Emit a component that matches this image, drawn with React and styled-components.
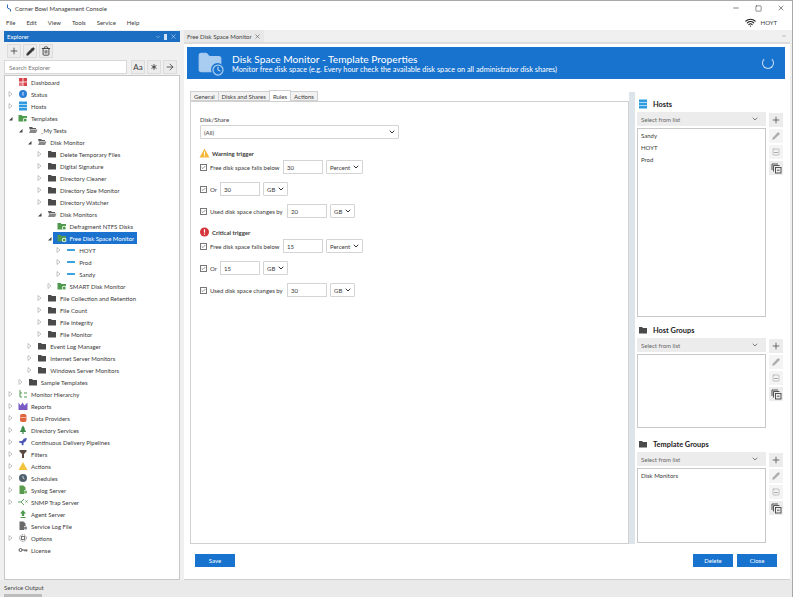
import styled, { createGlobalStyle } from "styled-components";
import { Plus, Pencil, Trash2, Minus, X, ChevronDown, ArrowRight, Asterisk, Wifi, Check, Folder, Clock, Square } from "lucide-react";

const GlobalStyle = createGlobalStyle`
    html, body { margin: 0; padding: 0; background: #f0f0f0; }
    body { font-family: "Lato", "Open Sans", sans-serif; font-size: 6px; color: #3a3a3a; }
    * { box-sizing: border-box; }
`

const treeRows = [
    { level: 0, label: "Dashboard", icon: "dash" },
    { level: 0, label: "Status", icon: "status", arrow: "closed" },
    { level: 0, label: "Hosts", icon: "hosts", arrow: "closed" },
    { level: 0, label: "Templates", icon: "green", arrow: "open" },
    { level: 1, label: "_My Tests", icon: "open", arrow: "open" },
    { level: 2, label: "Disk Monitor", icon: "open", arrow: "open" },
    { level: 3, label: "Delete Temporary Files", icon: "folder", arrow: "closed" },
    { level: 3, label: "Digital Signature", icon: "folder", arrow: "closed" },
    { level: 3, label: "Directory Cleaner", icon: "folder", arrow: "closed" },
    { level: 3, label: "Directory Size Monitor", icon: "folder", arrow: "closed" },
    { level: 3, label: "Directory Watcher", icon: "folder", arrow: "closed" },
    { level: 3, label: "Disk Monitors", icon: "open", arrow: "open" },
    { level: 4, label: "Defragment NTFS Disks", icon: "green" },
    { level: 4, label: "Free Disk Space Monitor", icon: "green", arrow: "open", selected: true },
    { level: 5, label: "HOYT", icon: "dash-host", arrow: "closed" },
    { level: 5, label: "Prod", icon: "dash-host", arrow: "closed" },
    { level: 5, label: "Sandy", icon: "dash-host", arrow: "closed" },
    { level: 4, label: "SMART Disk Monitor", icon: "green", arrow: "closed" },
    { level: 3, label: "File Collection and Retention", icon: "folder", arrow: "closed" },
    { level: 3, label: "File Count", icon: "folder", arrow: "closed" },
    { level: 3, label: "File Integrity", icon: "folder", arrow: "closed" },
    { level: 3, label: "File Monitor", icon: "folder", arrow: "closed" },
    { level: 2, label: "Event Log Manager", icon: "folder", arrow: "closed" },
    { level: 2, label: "Internet Server Monitors", icon: "folder", arrow: "closed" },
    { level: 2, label: "Windows Server Monitors", icon: "folder", arrow: "closed" },
    { level: 1, label: "Sample Templates", icon: "folder", arrow: "closed" },
    { level: 0, label: "Monitor Hierarchy", icon: "hierarchy", arrow: "closed" },
    { level: 0, label: "Reports", icon: "reports", arrow: "closed" },
    { level: 0, label: "Data Providers", icon: "data", arrow: "closed" },
    { level: 0, label: "Directory Services", icon: "tree", arrow: "closed" },
    { level: 0, label: "Continuous Delivery Pipelines", icon: "pipe", arrow: "closed" },
    { level: 0, label: "Filters", icon: "filter", arrow: "closed" },
    { level: 0, label: "Actions", icon: "warn", arrow: "closed" },
    { level: 0, label: "Schedules", icon: "clock", arrow: "closed" },
    { level: 0, label: "Syslog Server", icon: "syslog", arrow: "closed" },
    { level: 0, label: "SNMP Trap Server", icon: "snmp", arrow: "closed" },
    { level: 0, label: "Agent Server", icon: "agent" },
    { level: 0, label: "Service Log File", icon: "log" },
    { level: 0, label: "Options", icon: "options", arrow: "closed" },
    { level: 0, label: "License", icon: "key" },
]

const triggers = [
    { name: "Warning trigger", kind: "warn", below: "30", or: "30", used: "20" },
    { name: "Critical trigger", kind: "crit", below: "15", or: "15", used: "30" },
]

const sections = [
    { title: "Hosts", icon: "hosts", items: ["Sandy", "HOYT", "Prod"], height: 189, gap: 7 },
    { title: "Host Groups", icon: "folder", items: [], height: 74, gap: 10 },
    { title: "Template Groups", icon: "folder", items: ["Disk Monitors"], height: 75, gap: 0 },
]

const TreeIcon = ({ kind }) => {
    switch (kind) {
        case "dash":
            return <svg width="10" height="10" viewBox="0 0 10 10"><rect x="1" y="1" width="3.6" height="3.6" fill="#d8434a" /><rect x="5.4" y="1" width="3.6" height="3.6" fill="#d8434a" /><rect x="1" y="5.4" width="3.6" height="3.6" fill="#e0777a" /><rect x="5.4" y="5.4" width="3.6" height="3.6" fill="#d8434a" /></svg>
        case "status":
            return <svg width="10" height="10" viewBox="0 0 10 10"><circle cx="5" cy="5" r="4" fill="#2b7fd6" /><rect x="4.4" y="3" width="1.2" height="3.6" fill="#bcd9f5" /></svg>
        case "hosts":
            return <svg width="10" height="10" viewBox="0 0 10 10"><rect x="1" y="0.5" width="8" height="2.6" fill="#2f9ae0" /><rect x="1" y="3.7" width="8" height="2.6" fill="#2f9ae0" /><rect x="1" y="6.9" width="8" height="2.6" fill="#2f9ae0" /></svg>
        case "green":
            return <svg width="10" height="10" viewBox="0 0 10 10"><path d="M0.5 2h3l1 1h4.500v5.500h-8.500z" fill="#4f9a4f" /><circle cx="7.200" cy="7" r="2.300" fill="#fff" /><circle cx="7.200" cy="7" r="1.500" fill="#4f9a4f" /></svg>
        case "folder":
            return <svg width="10" height="10" viewBox="0 0 10 10"><path d="M1 2h3l1 1h4v5.500h-8z" fill="#4a4a4a" /></svg>
        case "open":
            return <svg width="10" height="10" viewBox="0 0 10 10"><path d="M1 2h3l1 1h3v1h-5l-1 1z" fill="#5a5a5a" /><path d="M1 8l1.500-3.400h7l-1.500 3.400z" fill="#888" /></svg>
        case "dash-host":
            return <svg width="10" height="10" viewBox="0 0 10 10"><rect x="1" y="4" width="8" height="2" rx="0.600" fill="#36a3e0" /></svg>
        case "hierarchy":
            return <svg width="10" height="10" viewBox="0 0 10 10" fill="none" stroke="#4f9a4f" strokeWidth="1"><path d="M2 1v7h2M2 4h2M6 4h3M6 8h3" /></svg>
        case "reports":
            return <svg width="10" height="10" viewBox="0 0 10 10"><path d="M0.500 9V1.500l2 3 2-3 2 3 3-3V9z" fill="#7a5bc4" /></svg>
        case "data":
            return <svg width="10" height="10" viewBox="0 0 10 10"><rect x="2" y="1" width="6.500" height="8" rx="2" fill="#e0663f" /><rect x="2" y="4" width="6.500" height="0.800" fill="#f6c9b8" /></svg>
        case "tree":
            return <svg width="10" height="10" viewBox="0 0 10 10"><path d="M5 0.500l2 3H6.200l2 3.500H1.800l2-3.500H3z" fill="#3a8a4a" /><rect x="4.400" y="7" width="1.200" height="2" fill="#3a8a4a" /></svg>
        case "pipe":
            return <svg width="10" height="10" viewBox="0 0 10 10"><path d="M9 1L6 1.500 4 4H1.500L1 5.500l2.500.5.500 2.500L5.500 8V6L8 4z" fill="#4a55b8" /></svg>
        case "filter":
            return <svg width="10" height="10" viewBox="0 0 10 10"><path d="M1.500 1h7v1.500L6 5v4H4V5L1.500 2.500z" fill="#5a4a42" /></svg>
        case "warn":
            return <svg width="10" height="10" viewBox="0 0 10 10"><path d="M5 1l4.500 8h-9z" fill="#f4c33d" /></svg>
        case "clock":
            return <svg width="10" height="10" viewBox="0 0 10 10"><circle cx="5" cy="5" r="4" fill="#50606e" /><path d="M5 2.800V5l1.500 1" stroke="#fff" strokeWidth="0.700" fill="none" /></svg>
        case "syslog":
            return <svg width="10" height="10" viewBox="0 0 10 10"><path d="M1.500 0.500h4l2 2v2.500H6v4H1.500z" fill="#5a9a4f" /><circle cx="7.500" cy="7" r="1.700" fill="#7db86f" /></svg>
        case "snmp":
            return <svg width="10" height="10" viewBox="0 0 10 10" fill="none" stroke="#4f9a4f" strokeWidth="0.900"><path d="M0 5h3M3 5l3-3M6 8L3 5M7.500 3.500l2 2M9.500 3.500l-2 2" /></svg>
        case "agent":
            return <svg width="10" height="10" viewBox="0 0 10 10"><path d="M5 1l3 3.500H6.200V7H3.800V4.500H2z" fill="#4f9a4f" /><rect x="2.500" y="8" width="5" height="1" fill="#4f9a4f" /></svg>
        case "log":
            return <svg width="10" height="10" viewBox="0 0 10 10"><path d="M1.500 0.500h4l2 2v2.500H6v4H1.500z" fill="#6a6a6a" /><circle cx="7.500" cy="7" r="1.700" fill="#8a8a8a" /></svg>
        case "options":
            return <svg width="10" height="10" viewBox="0 0 10 10" fill="none" stroke="#777" strokeWidth="1"><circle cx="5" cy="5" r="3.300" strokeDasharray="1.500 0.800" /><rect x="3.500" y="3.500" width="3" height="3" /></svg>
        case "key":
            return <svg width="10" height="10" viewBox="0 0 10 10" fill="none" stroke="#555" strokeWidth="1"><circle cx="2.500" cy="5" r="1.500" /><path d="M4 5h5.500M7 5v1.500M8.700 5v1.500" /></svg>
        default:
            return null
    }
}

const Expander = ({ state }) => {
    if (state === "open") return <svg width="5" height="5" viewBox="0 0 5 5"><path d="M4.500 1v3.500H1z" fill="#444" /></svg>
    if (state === "closed") return <svg width="5" height="6" viewBox="0 0 5 6"><path d="M1 .500l3 2.500-3 2.500z" fill="#fff" stroke="#a0a0a0" strokeWidth=".6" /></svg>
    return null
}

const Combo = ({ value, width }) => (
    <ComboBox $width={width}>
        <span>{value}</span>
        <ChevronDown size={8} strokeWidth={3} color="#333" />
    </ComboBox>
)

const Tick = () => (
    <CheckBox><Check size={7} strokeWidth={2.500} color="#333" /></CheckBox>
)

const Trigger = ({ trigger }) => (
    <TriggerBlock>
        <TriggerTitle>
            {trigger.kind === "warn" ? (
                <svg width="11" height="10" viewBox="0 0 11 10"><path d="M5.500 0.500l5 9h-10z" fill="#f4b93a" /><rect x="5" y="3.500" width="1" height="3.200" fill="#fff" /><rect x="5" y="7.300" width="1" height="1" fill="#fff" /></svg>
            ) : (
                <svg width="11" height="10" viewBox="0 0 11 10"><circle cx="5.500" cy="5" r="4.500" fill="#d4343a" /><rect x="4.900" y="2.300" width="1.200" height="3.400" fill="#fff" /><rect x="4.900" y="6.500" width="1.200" height="1.200" fill="#fff" /></svg>
            )}
            <span>{trigger.name}</span>
        </TriggerTitle>
        <TriggerRow>
            <Tick />
            <RowLabel $width={70}>Free disk space falls below</RowLabel>
            <NumberInput>{trigger.below}</NumberInput>
            <Combo value="Percent" width={37} />
        </TriggerRow>
        <TriggerRow>
            <Tick />
            <RowLabel $width={7}>Or</RowLabel>
            <NumberInput>{trigger.or}</NumberInput>
            <Combo value="GB" width={25} />
        </TriggerRow>
        <TriggerRow>
            <Tick />
            <RowLabel $width={74}>Used disk space changes by</RowLabel>
            <NumberInput>{trigger.used}</NumberInput>
            <Combo value="GB" width={25} />
        </TriggerRow>
    </TriggerBlock>
)

const SideSection = ({ section }) => (
    <Section $gap={section.gap}>
        <SectionTitle>
            <TreeIcon kind={section.icon} />
            <span>{section.title}</span>
        </SectionTitle>
        <SectionBody>
            <div>
                <SideCombo>
                    <span>Select from list</span>
                    <ChevronDown size={8} strokeWidth={2} color="#444" />
                </SideCombo>
                <ListBox $height={section.height}>
                    {section.items.map((item) => <ListItem key={item}>{item}</ListItem>)}
                </ListBox>
            </div>
            <SideButtons>
                <SideButton><Plus size={10} color="#555" /></SideButton>
                <SideButton $faded><Pencil size={8} color="#aaa" fill="#aaa" /></SideButton>
                <SideButton $faded><Square size={8} color="#aaa" /><MinusMark /></SideButton>
                <SideButton>
                    <svg width="11" height="11" viewBox="0 0 11 11" fill="none" stroke="#444" strokeWidth="0.900"><path d="M1 7V1h6M2.500 8.500v-6h6" /><rect x="4.500" y="4.500" width="5.500" height="5.500" /><path d="M6 7.200h2.500" /></svg>
                </SideButton>
            </SideButtons>
        </SectionBody>
    </Section>
)

const App = () => {
    return (
        <>
            <GlobalStyle />
            <Window>
                <TitleBar>
                    <TitleLeft>
                        <svg width="6" height="8" viewBox="0 0 6 8" fill="none" stroke="#2b6fb8" strokeWidth="1"><path d="M1.500 0.500v3.500l3 1.500v2" /></svg>
                        <span>Corner Bowl Management Console</span>
                    </TitleLeft>
                    <WindowButtons>
                        <Minus size={8} color="#444" />
                        <Square size={7} color="#444" strokeWidth={2} />
                        <X size={8} color="#444" />
                    </WindowButtons>
                </TitleBar>
                <MenuBar>
                    <MenuItems>
                        {["File", "Edit", "View", "Tools", "Service", "Help"].map((item) => (
                            <span key={item}>{item}</span>
                        ))}
                    </MenuItems>
                    <HostBadge>
                        <Wifi size={11} color="#222" strokeWidth={2.500} />
                        <span>HOYT</span>
                    </HostBadge>
                </MenuBar>
                <Workspace>
                    <Explorer>
                        <ExplorerHeader>
                            <span>Explorer</span>
                            <HeaderDots />
                            <ChevronDown size={6} color="#cfe2f6" />
                            <HeaderPin />
                            <X size={7} color="#cfe2f6" />
                        </ExplorerHeader>
                        <ToolRow>
                            <ToolButton><Plus size={10} color="#444" /></ToolButton>
                            <ToolButton><Pencil size={9} color="#333" fill="#333" /></ToolButton>
                            <ToolButton><Trash2 size={10} color="#333" /></ToolButton>
                        </ToolRow>
                        <SearchRow>
                            <SearchBox>Search Explorer</SearchBox>
                            <SearchButton $text>Aa</SearchButton>
                            <SearchButton><Asterisk size={10} color="#333" /></SearchButton>
                            <SearchButton><ArrowRight size={10} color="#444" /></SearchButton>
                        </SearchRow>
                        <Tree>
                            {treeRows.map((row) => (
                                <TreeRow key={row.label} $level={row.level}>
                                    <ArrowSlot><Expander state={row.arrow} /></ArrowSlot>
                                    <RowContent $selected={row.selected}>
                                        <TreeIcon kind={row.icon} />
                                        <span>{row.label}</span>
                                    </RowContent>
                                </TreeRow>
                            ))}
                        </Tree>
                    </Explorer>
                    <Main>
                        <TabStrip>
                            <DocTab>
                                <span>Free Disk Space Monitor</span>
                                <X size={7} color="#555" />
                            </DocTab>
                            <ChevronDown size={6} color="#777" />
                        </TabStrip>
                        <Page>
                            <Banner>
                                <BannerIcon>
                                    <Folder size={26} color="#a9cdf0" fill="#a9cdf0" strokeWidth={1} />
                                    <ClockBadge><Clock size={12} color="#a9cdf0" strokeWidth={2.500} /></ClockBadge>
                                </BannerIcon>
                                <BannerText>
                                    <h1>Disk Space Monitor - Template Properties</h1>
                                    <p>Monitor free disk space (e.g. Every hour check the available disk space on all administrator disk shares)</p>
                                </BannerText>
                                <Spinner />
                            </Banner>
                            <Columns>
                                <FormColumn>
                                    <Tabs>
                                        <Tab>General</Tab>
                                        <Tab>Disks and Shares</Tab>
                                        <Tab $active>Rules</Tab>
                                        <Tab>Actions</Tab>
                                    </Tabs>
                                    <TabPanel>
                                        <FieldLabel>Disk/Share</FieldLabel>
                                        <Combo value="(All)" width={199} />
                                        {triggers.map((trigger) => <Trigger key={trigger.name} trigger={trigger} />)}
                                    </TabPanel>
                                </FormColumn>
                                <Splitter />
                                <SideColumn>
                                    {sections.map((section) => <SideSection key={section.title} section={section} />)}
                                </SideColumn>
                            </Columns>
                            <Footer>
                                <BlueButton>Save</BlueButton>
                                <FooterRight>
                                    <BlueButton>Delete</BlueButton>
                                    <BlueButton>Close</BlueButton>
                                </FooterRight>
                            </Footer>
                        </Page>
                    </Main>
                </Workspace>
                <StatusBar>
                    <span>Service Output</span>
                    <StatusTab />
                </StatusBar>
            </Window>
        </>
    )
}

const Window = styled.div`
    width: 793px;
    height: 597px;
    overflow: hidden;
    display: flex;
    flex-direction: column;
    background: #f0f0f0;
    border-top: 1px solid #a8a8a8;
    border-right: 1px solid #a8a8a8;
`
const TitleBar = styled.div`
    height: 14px;
    background: #fff;
    display: flex;
    align-items: center;
    justify-content: space-between;
    padding: 0 7px 0 6px;
`
const TitleLeft = styled.div`
    display: flex;
    align-items: center;
    gap: 3px;
`
const WindowButtons = styled.div`
    display: flex;
    align-items: center;
    gap: 15px;
`
const MenuBar = styled.div`
    height: 15px;
    background: #fff;
    display: flex;
    align-items: center;
    justify-content: space-between;
    padding: 0 15px 0 6px;
`
const MenuItems = styled.div`
    display: flex;
    gap: 11px;
`
const HostBadge = styled.div`
    display: flex;
    align-items: center;
    gap: 5px;
`
const Workspace = styled.div`
    flex: 1;
    min-height: 0;
    display: flex;
    padding-left: 4px;
`
const Explorer = styled.div`
    width: 176px;
    display: flex;
    flex-direction: column;
    margin-top: 1px;
`
const ExplorerHeader = styled.div`
    height: 11px;
    background: #1b6ec2;
    color: #fff;
    display: flex;
    align-items: center;
    gap: 3px;
    padding: 0 3px;
`
const HeaderDots = styled.div`
    flex: 1;
    height: 4px;
    background-image: radial-gradient(#4f93d8 0.6px, transparent 0.7px);
    background-size: 2px 2px;
`
const HeaderPin = styled.div`
    width: 3px;
    height: 6px;
    background: #cfe2f6;
`
const ToolRow = styled.div`
    display: flex;
    gap: 2px;
    padding: 2px 3px;
`
const ToolButton = styled.div`
    width: 14px;
    height: 14px;
    background: #ececec;
    border: 1px solid #dcdcdc;
    display: flex;
    align-items: center;
    justify-content: center;
`
const SearchRow = styled.div`
    display: flex;
    gap: 2px;
    height: 14px;
    margin-bottom: 1px;
`
const SearchBox = styled.div`
    width: 123px;
    margin-right: 2px;
    background: #fff;
    border: 1px solid #d8d8d8;
    color: #777;
    display: flex;
    align-items: center;
    padding-left: 4px;
`
const SearchButton = styled.div`
    width: 14px;
    background: #ececec;
    border: 1px solid #dcdcdc;
    display: flex;
    align-items: center;
    justify-content: center;
    font-size: ${(props) => (props.$text ? "8px" : "6px")};
`
const Tree = styled.div`
    flex: 1;
    min-height: 0;
    background: #fff;
    border: 1px solid #c8c8c8;
`
const TreeRow = styled.div`
    height: 12px;
    display: flex;
    align-items: center;
    padding-left: ${(props) => 2 + props.$level * 9.65}px;
`
const ArrowSlot = styled.div`
    width: 7px;
    display: flex;
    align-items: center;
    justify-content: center;
`
const RowContent = styled.div`
    height: 12px;
    display: flex;
    align-items: center;
    gap: 3px;
    padding: 0 3px 0 4px;
    white-space: nowrap;
    background: ${(props) => (props.$selected ? "#1b72cf" : "transparent")};
    color: ${(props) => (props.$selected ? "#fff" : "#3a3a3a")};
`
const Main = styled.div`
    flex: 1;
    min-width: 0;
    display: flex;
    flex-direction: column;
    margin-left: 4px;
    margin-right: 2px;
`
const TabStrip = styled.div`
    height: 14px;
    display: flex;
    align-items: center;
    justify-content: space-between;
    padding-right: 3px;
    border-bottom: 2px solid #dcdcdc;
`
const DocTab = styled.div`
    width: 80px;
    height: 12px;
    display: flex;
    align-items: center;
    justify-content: space-between;
    padding: 0 3px;
    background: #e8e8e8;
    color: #444;
    white-space: nowrap;
`
const Page = styled.div`
    flex: 1;
    min-height: 0;
    background: #fff;
    display: flex;
    flex-direction: column;
    padding: 3px 5px 0 3px;
    border-bottom: 1px solid #cfcfcf;
`
const Banner = styled.div`
    height: 32px;
    flex-shrink: 0;
    background: #1873cf;
    display: flex;
    align-items: center;
    padding: 0 11px 0 10px;
    color: #fff;
`
const BannerIcon = styled.div`
    position: relative;
    width: 35px;
    height: 26px;
`
const ClockBadge = styled.div`
    position: absolute;
    right: 8px;
    bottom: 0;
    width: 13px;
    height: 13px;
    border-radius: 50%;
    background: #1873cf;
    display: flex;
    align-items: center;
    justify-content: center;
`
const BannerText = styled.div`
    flex: 1;
    h1 {
        margin: 0;
        font-size: 10.2px;
        font-weight: 400;
        line-height: 12px;
    }
    p {
        margin: 0;
        font-size: 7.3px;
        line-height: 9px;
    }
`
const Spinner = styled.div`
    width: 12px;
    height: 12px;
    border-radius: 50%;
    border: 1.5px solid #cfe2f6;
    border-top-color: #1873cf;
`
const Columns = styled.div`
    flex: 1;
    min-height: 0;
    display: flex;
    padding: 12px 0 0 3px;
`
const FormColumn = styled.div`
    width: 439px;
    display: flex;
    flex-direction: column;
`
const Tabs = styled.div`
    display: flex;
    height: 10px;
    align-items: flex-end;
`
const Tab = styled.div`
    height: ${(props) => (props.$active ? "11px" : "10px")};
    padding: 0 3px;
    background: ${(props) => (props.$active ? "#fff" : "#f2f2f2")};
    border: 1px solid #d0d0d0;
    border-bottom: ${(props) => (props.$active ? "none" : "1px solid #d0d0d0")};
    display: flex;
    align-items: center;
    margin-right: -1px;
    position: relative;
    z-index: ${(props) => (props.$active ? 1 : 0)};
`
const TabPanel = styled.div`
    height: 443px;
    border: 1px solid #d0d0d0;
    padding: 14px 9px 0;
`
const FieldLabel = styled.div`
    height: 9px;
    line-height: 8px;
`
const ComboBox = styled.div`
    width: ${(props) => props.$width}px;
    height: 14px;
    flex-shrink: 0;
    background: #fff;
    border: 1px solid #d4d4d4;
    border-radius: 1px;
    display: flex;
    align-items: center;
    justify-content: space-between;
    padding: 0 2px 0 3px;
`
const TriggerBlock = styled.div`
    margin-top: 9px;
    display: flex;
    flex-direction: column;
    gap: 8px;
    & + & { margin-top: 9px; }
`
const TriggerTitle = styled.div`
    height: 10px;
    margin-bottom: -6px;
    display: flex;
    align-items: center;
    gap: 2px;
    font-weight: 700;
    margin-left: -1px;
`
const TriggerRow = styled.div`
    display: flex;
    align-items: center;
    height: 14px;
    gap: 3px;
`
const CheckBox = styled.div`
    width: 7px;
    height: 7px;
    border: 1px solid #777;
    display: flex;
    align-items: center;
    justify-content: center;
`
const RowLabel = styled.span`
    width: ${(props) => props.$width}px;
    white-space: nowrap;
`
const NumberInput = styled.div`
    width: 40px;
    height: 14px;
    background: #fff;
    border: 1px solid #d4d4d4;
    display: flex;
    align-items: center;
    padding-left: 3px;
`
const Splitter = styled.div`
    width: 6px;
    margin-top: 1px;
    background: #dde4ea;
`
const SideColumn = styled.div`
    margin-left: 2px;
    padding-top: 7px;
    display: flex;
    flex-direction: column;
`
const Section = styled.div`
    margin-bottom: ${(props) => props.$gap}px;
`
const SectionTitle = styled.div`
    height: 14px;
    padding: 0 0 2px 1px;
    display: flex;
    align-items: center;
    gap: 5px;
    font-weight: 700;
    font-size: 7.4px;
    color: #222;
`
const SectionBody = styled.div`
    display: flex;
    gap: 3px;
`
const SideCombo = styled.div`
    width: 129px;
    height: 14px;
    background: #ececec;
    display: flex;
    align-items: center;
    justify-content: space-between;
    padding: 0 7px 0 4px;
    margin-bottom: 2px;
    color: #666;
`
const ListBox = styled.div`
    height: ${(props) => props.$height}px;
    background: #fff;
    border: 1px solid #c8c8c8;
    padding: 2px 3px;
`
const ListItem = styled.div`
    height: 12px;
    line-height: 10px;
`
const SideButtons = styled.div`
    display: flex;
    flex-direction: column;
    gap: 2px;
    padding-top: 1px;
`
const SideButton = styled.div`
    width: 14px;
    height: 14px;
    position: relative;
    background: ${(props) => (props.$faded ? "#f4f4f4" : "#ececec")};
    display: flex;
    align-items: center;
    justify-content: center;
`
const MinusMark = styled.div`
    position: absolute;
    width: 4px;
    height: 1px;
    background: #aaa;
`
const Footer = styled.div`
    height: 35px;
    flex-shrink: 0;
    display: flex;
    justify-content: space-between;
    padding: 10px 8px 0 8px;
`
const FooterRight = styled.div`
    display: flex;
    gap: 4px;
`
const BlueButton = styled.div`
    width: 40px;
    height: 13px;
    background: #1873cf;
    color: #fff;
    display: flex;
    align-items: center;
    justify-content: center;
`
const StatusBar = styled.div`
    height: 17px;
    flex-shrink: 0;
    padding: 4px 0 0 4px;
    background: #eaeaea;
    color: #444;
    display: flex;
    flex-direction: column;
    justify-content: space-between;
`
const StatusTab = styled.div`
    width: 38px;
    height: 3px;
    background: #bdbdbd;
`

export default App
